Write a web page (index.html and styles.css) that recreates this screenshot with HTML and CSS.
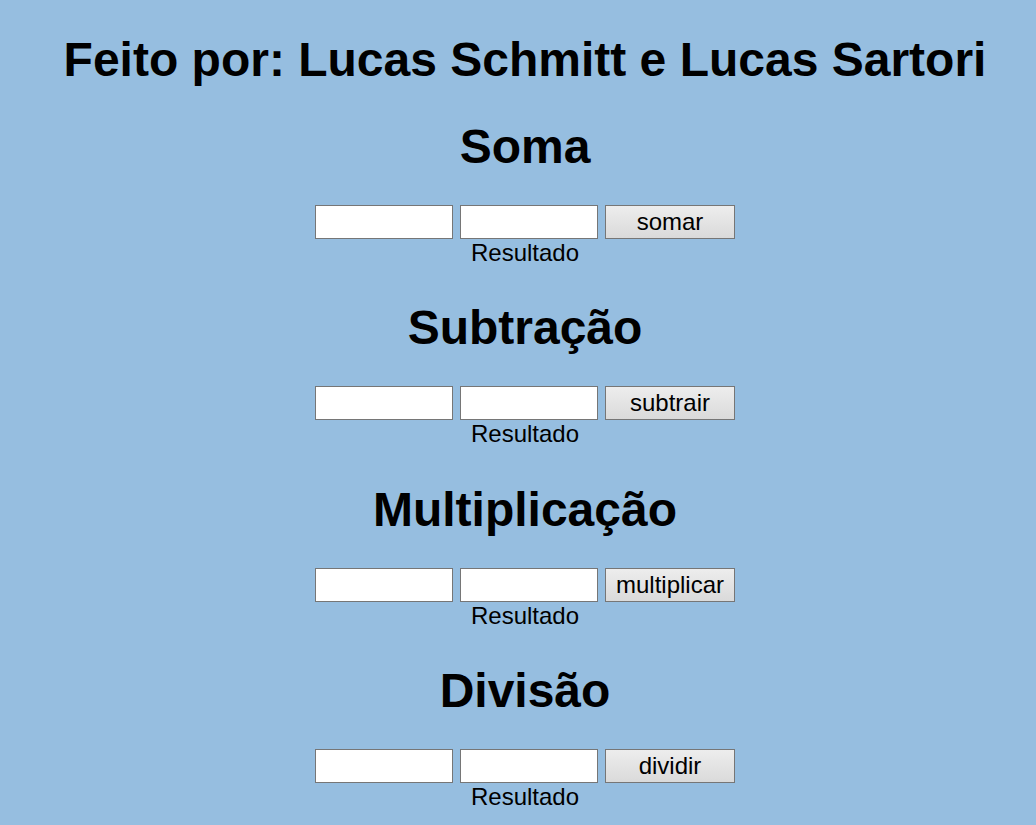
FILE: index.html
```html
<!DOCTYPE html>
<html lang="pt">
<head>
<meta charset="utf-8">
<title>Calculadora</title>
<link rel="stylesheet" href="styles.css">
</head>
<body>
<main class="page">
  <h1 class="title">Feito por: Lucas Schmitt e Lucas Sartori</h1>

  <section class="op">
    <h1 class="op-title">Soma</h1>
    <div class="row">
      <input class="field" type="text"><input class="field" type="text"><button class="btn" type="button">somar</button>
    </div>
    <div class="result">Resultado</div>
  </section>

  <section class="op">
    <h1 class="op-title">Subtração</h1>
    <div class="row">
      <input class="field" type="text"><input class="field" type="text"><button class="btn" type="button">subtrair</button>
    </div>
    <div class="result">Resultado</div>
  </section>

  <section class="op">
    <h1 class="op-title">Multiplicação</h1>
    <div class="row">
      <input class="field" type="text"><input class="field" type="text"><button class="btn" type="button">multiplicar</button>
    </div>
    <div class="result">Resultado</div>
  </section>

  <section class="op">
    <h1 class="op-title">Divisão</h1>
    <div class="row">
      <input class="field" type="text"><input class="field" type="text"><button class="btn" type="button">dividir</button>
    </div>
    <div class="result">Resultado</div>
  </section>
</main>
</body>
</html>
```

FILE: styles.css
```css
html, body {
  background: #96bee0;
}
body {
  margin: 0;
  font-family: "Liberation Sans", Arial, sans-serif;
  font-size: 24px;
  color: #000;
}
.page {
  padding: 0 0 0 14px;
  text-align: center;
}
.title, .op-title {
  font-size: 48px;
  font-weight: bold;
  margin: 32px 0;
  line-height: normal;
}
.page > .title:first-child {
  margin-top: 0;
  padding-top: 32px;
}
.op {
  padding-bottom: 1.33px;
}
.row {
  display: flex;
  justify-content: center;
  gap: 7px;
  height: 34px;
  margin-top: -1px;
}
.field {
  box-sizing: border-box;
  width: 138px;
  height: 34px;
  margin: 0;
  border: 1px solid #767676;
  background: #fff;
  padding: 0 4px;
  font: inherit;
}
.btn {
  box-sizing: border-box;
  width: 130px;
  height: 34px;
  margin: 0;
  padding: 0;
  border: 1px solid #767676;
  border-radius: 0;
  background: linear-gradient(#ededed, #dadada);
  font-family: "Liberation Sans", Arial, sans-serif;
  font-size: 24px;
  color: #000;
  line-height: 30px;
}
.result {
  line-height: normal;
  font-size: 24px;
}
```
